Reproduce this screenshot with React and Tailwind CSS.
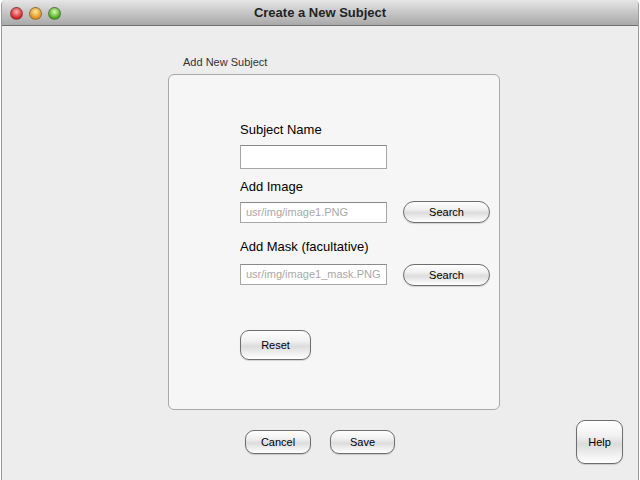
import React from 'react';

const btn =
  'flex items-center justify-center border border-[#6e6e6e] bg-[linear-gradient(to_bottom,#ffffff_0%,#f1f1f1_35%,#dcdcdc_55%,#f4f4f4_85%,#ffffff_100%)] text-[11px] text-black shadow-[0_1px_1px_rgba(0,0,0,0.15)]';

function Light({ from, to }) {
  return (
    <span
      className="block w-[13px] h-[13px] rounded-full border border-[#555]/60"
      style={{ background: `radial-gradient(circle at 50% 35%, ${from} 0%, ${to} 75%)` }}
    />
  );
}

function Field({ value, tall }) {
  return (
    <div
      className={`w-[147px] ${tall ? 'h-[24px]' : 'h-[21px]'} bg-white border border-[#a6a6a6] border-t-[#8a8a8a] flex items-center px-[5px] text-[11px] text-[#a8a8a8]`}
    >
      {value}
    </div>
  );
}

export default function App() {
  return (
    <div className="w-[640px] h-[480px] bg-white font-['Liberation_Sans',Arial,sans-serif]">
      <div className="ml-[1px] w-[638px] h-[480px] flex flex-col bg-[#ededed] border-x border-[#9a9a9a] rounded-t-[5px] overflow-hidden">
        {/* title bar */}
        <div className="relative h-[26px] shrink-0 flex items-center justify-center bg-[linear-gradient(to_bottom,#e6e6e6_0%,#c9c9c9_45%,#a9a9a9_100%)] border-b border-[#6f6f6f]">
          <div className="absolute left-[8px] top-[7px] flex gap-[6px]">
            <Light from="#ffb3b3" to="#d0161a" />
            <Light from="#ffe9a0" to="#e0890e" />
            <Light from="#d8ffb0" to="#3f9f12" />
          </div>
          <span className="text-[13px] font-bold text-[#222]">Create a New Subject</span>
        </div>

        {/* body */}
        <div className="flex flex-col pl-[166px]">
          <div className="mt-[30px] pl-[15px] text-[11px] leading-[13px] text-[#333]">Add New Subject</div>
          <div className="mt-[5px] w-[332px] h-[336px] rounded-[6px] border border-[#a9a9a9] bg-[#f6f6f6] pl-[71px] pt-[47px] flex flex-col">
            <div className="text-[13px] leading-[16px] text-black">Subject Name</div>
            <div className="mt-[7px]">
              <Field tall />
            </div>
            <div className="mt-[10px] text-[13px] leading-[16px] text-black">Add Image</div>
            <div className="mt-[6px] flex items-end">
              <Field value="usr/img/image1.PNG" />
              <button className={`${btn} ml-[16px] w-[87px] h-[22px] rounded-full`}>Search</button>
            </div>
            <div className="mt-[16px] text-[13px] leading-[16px] text-black">Add Mask (facultative)</div>
            <div className="mt-[9px] flex items-start">
              <Field value="usr/img/image1_mask.PNG" />
              <button className={`${btn} ml-[16px] w-[87px] h-[22px] rounded-full`}>Search</button>
            </div>
            <button className={`${btn} mt-[44px] w-[71px] h-[30px] rounded-[9px]`}>Reset</button>
          </div>

          <div className="flex items-start pl-[77px]">
            <button className={`${btn} mt-[20px] w-[66px] h-[24px] rounded-[9px]`}>Cancel</button>
            <button className={`${btn} mt-[20px] ml-[19px] w-[65px] h-[24px] rounded-[9px]`}>Save</button>
            <button className={`${btn} mt-[10px] ml-[181px] w-[47px] h-[44px] rounded-[9px]`}>Help</button>
          </div>
        </div>
      </div>
    </div>
  );
}
